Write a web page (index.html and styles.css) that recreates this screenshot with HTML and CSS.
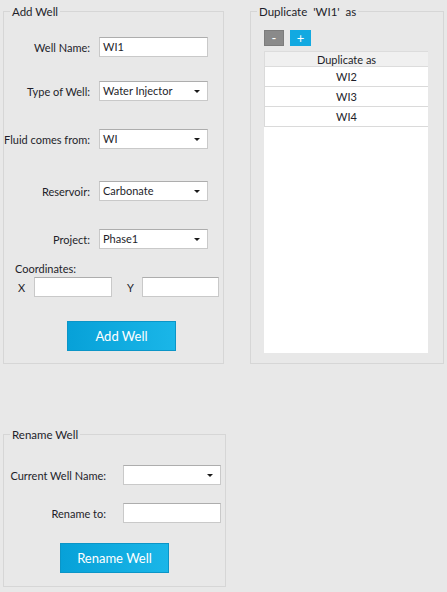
FILE: index.html
```html
<!DOCTYPE html>
<html>
<head>
<meta charset="utf-8">
<link rel="stylesheet" href="styles.css">
</head>
<body>
<div class="page">
  <div class="top">
    <fieldset class="group add-group">
      <legend>Add Well</legend>
      <div class="form-row r1">
        <label class="lbl">Well Name:</label>
        <div class="field text">WI1</div>
      </div>
      <div class="form-row r2">
        <label class="lbl">Type of Well:</label>
        <div class="field combo">Water Injector<span class="arrow"></span></div>
      </div>
      <div class="form-row r3">
        <label class="lbl">Fluid comes from:</label>
        <div class="field combo">WI<span class="arrow"></span></div>
      </div>
      <div class="form-row r4">
        <label class="lbl">Reservoir:</label>
        <div class="field combo">Carbonate<span class="arrow"></span></div>
      </div>
      <div class="form-row r5">
        <label class="lbl">Project:</label>
        <div class="field combo">Phase1<span class="arrow"></span></div>
      </div>
      <div class="coord-title">Coordinates:</div>
      <div class="coord-row">
        <span class="axis ax">X</span>
        <div class="field coord cx"></div>
        <span class="axis ay">Y</span>
        <div class="field coord cy"></div>
      </div>
      <button class="primary add-btn">Add Well</button>
    </fieldset>

    <fieldset class="group dup-group">
      <legend>Duplicate &nbsp;'WI1' &nbsp;as</legend>
      <div class="dup-body">
        <div class="tools">
          <button class="tool minus">-</button>
          <button class="tool plus">+</button>
        </div>
        <div class="table">
          <div class="thead">Duplicate as</div>
          <div class="trow">WI2</div>
          <div class="trow">WI3</div>
          <div class="trow">WI4</div>
          <div class="tfill"></div>
        </div>
      </div>
    </fieldset>
  </div>

  <fieldset class="group rename-group">
    <legend>Rename Well</legend>
    <div class="rn-row rr1">
      <label class="rn-lbl">Current Well Name:</label>
      <div class="field combo rn-field"><span class="arrow"></span></div>
    </div>
    <div class="rn-row rr2">
      <label class="rn-lbl">Rename to:</label>
      <div class="field text rn-field"></div>
    </div>
    <button class="primary rename-btn">Rename Well</button>
  </fieldset>
</div>
</body>
</html>
```

FILE: styles.css
```css
* { box-sizing: border-box; }
html, body {
  margin: 0;
  padding: 0;
  background: #e8e8e8;
}
body {
  font-family: "Lato", "Liberation Sans", sans-serif;
  font-size: 11px;
  color: #1e1e2a;
  width: 447px;
  height: 592px;
  overflow: hidden;
}
.page {
  padding: 4px 0 0 3px;
}
.top {
  display: flex;
  gap: 26px;
  align-items: stretch;
}
.group {
  margin: 0;
  padding: 0;
  border: 1px solid #d6d6d6;
  min-width: 0;
}
.group legend {
  padding: 0 2px;
  margin-left: 6px;
  line-height: 15px;
  font-size: 11.5px;
}
.add-group {
  width: 221px;
  padding-bottom: 11px;
}
.form-row {
  display: grid;
  grid-template-columns: 86px 109px;
  column-gap: 9px;
  align-items: center;
  height: 20px;
}
.r1 { margin-top: 18px; }
.r2 { margin-top: 24px; }
.r3 { margin-top: 28px; }
.r4 { margin-top: 32px; }
.r5 { margin-top: 28px; }
.lbl {
  text-align: right;
  white-space: nowrap;
}
.field {
  position: relative;
  height: 20px;
  background: #fff;
  border: 1px solid #c9c9c9;
  border-top-color: #adadad;
  padding: 0 0 0 3px;
  line-height: 18px;
  white-space: nowrap;
}
.arrow {
  position: absolute;
  right: 7px;
  top: 8px;
  width: 0;
  height: 0;
  border-left: 3px solid transparent;
  border-right: 3px solid transparent;
  border-top: 3px solid #1a1a1a;
}
.coord-title {
  margin-top: 12px;
  padding-left: 11px;
  line-height: 15px;
}
.coord-row {
  display: flex;
  align-items: center;
  margin-top: 1px;
  padding-left: 14px;
  height: 20px;
}
.ax { width: 16px; }
.ay { margin-left: 15px; width: 15px; }
.cx { width: 78px; }
.cy { width: 77px; }
.primary {
  display: block;
  height: 30px;
  width: 109px;
  border: 1px solid #0b95c7;
  background: linear-gradient(to right, #07a1d8, #1ab6e8);
  color: #fff;
  font-family: "Lato", "Liberation Sans", sans-serif;
  font-size: 13px;
  padding: 0;
  margin: 0;
}
.add-btn {
  margin-top: 24px;
  margin-left: 63px;
}
.dup-group {
  width: 194px;
  display: flex;
  flex-direction: column;
}
.dup-body {
  flex: 1;
  display: flex;
  flex-direction: column;
  padding: 0 15px 10px 13px;
}
.tools {
  display: flex;
  gap: 6px;
  margin-top: 11px;
}
.tool {
  width: 20px;
  height: 16px;
  border: 1px solid transparent;
  color: #fff;
  font-family: "Lato", "Liberation Sans", sans-serif;
  font-size: 13px;
  line-height: 12px;
  padding: 0;
  margin: 0;
}
.minus {
  background: #8a8a8a;
  border-color: #7c7c7c;
}
.plus {
  width: 21px;
  background: #12a9e1;
  border-color: #12a9e1;
}
.table {
  margin-top: 5px;
  flex: 1;
  display: flex;
  flex-direction: column;
  background: #fff;
  min-height: 302px;
}
.thead {
  height: 16px;
  line-height: 15px;
  text-align: center;
  background: #f0f0f0;
  border: 1px solid #dcdcdc;
  border-right: none;
}
.trow {
  height: 20px;
  line-height: 19px;
  text-align: center;
  border-bottom: 1px solid #dadada;
  border-left: 1px solid #dadada;
}
.tfill {
  flex: 1;
  background: #fff;
}
.rename-group {
  width: 223px;
  margin-top: 63px;
  padding-bottom: 13px;
}
.rn-row {
  display: grid;
  grid-template-columns: 102px 98px;
  column-gap: 17px;
  align-items: center;
  height: 20px;
}
.rr1 { margin-top: 23px; }
.rr2 { margin-top: 18px; }
.rn-lbl {
  text-align: right;
  white-space: nowrap;
}
.rename-btn {
  margin-top: 20px;
  margin-left: 56px;
}
```
